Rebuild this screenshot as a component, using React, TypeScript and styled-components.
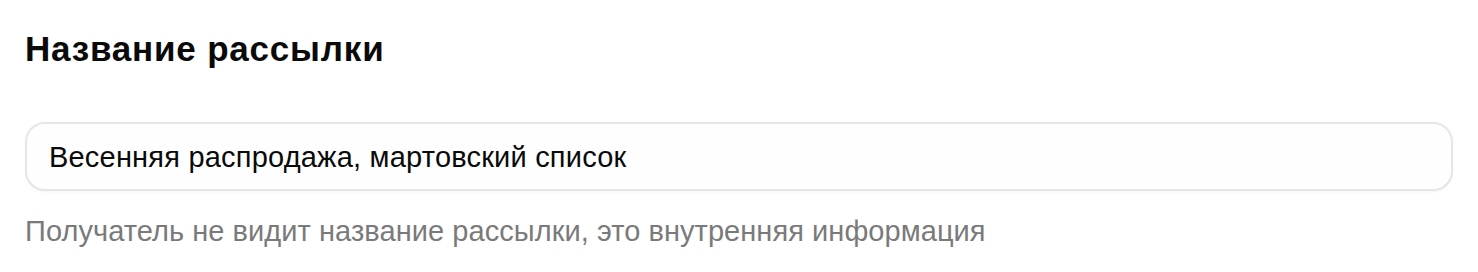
import React from 'react'
import styled, { createGlobalStyle } from 'styled-components'

const GlobalStyle = createGlobalStyle`
  body {
    margin: 0;
    background: #ffffff;
    font-family: "Liberation Sans", Arial, sans-serif;
  }
`

const Field = styled.section`
  display: flex;
  flex-direction: column;
  padding: 28px 25px 0 25px;
`

const Title = styled.h2`
  margin: 0;
  font-size: 35px;
  line-height: 42px;
  font-weight: 700;
  letter-spacing: 0.8px;
  color: #0a0a0a;
`

const InputBox = styled.div`
  margin-top: 52px;
  height: 69px;
  box-sizing: border-box;
  border: 2px solid #e6e6e6;
  border-radius: 20px;
  background: #fefefe;
  box-shadow: 0 1px 3px rgba(0, 0, 0, 0.04);
  display: flex;
  align-items: center;
  padding: 0 22px;
`

const Value = styled.span`
  font-size: 29px;
  line-height: 34px;
  letter-spacing: 0.2px;
  color: #0a0a0a;
`

const Hint = styled.p`
  margin: 23px 0 0 0;
  font-size: 29px;
  line-height: 34px;
  letter-spacing: 0.06px;
  color: #7a7a7a;
`

const App = () => {
  return (
    <>
      <GlobalStyle />
      <Field>
        <Title>Название рассылки</Title>
        <InputBox>
          <Value>Весенняя распродажа, мартовский список</Value>
        </InputBox>
        <Hint>Получатель не видит название рассылки, это внутренняя информация</Hint>
      </Field>
    </>
  )
}

export default App
